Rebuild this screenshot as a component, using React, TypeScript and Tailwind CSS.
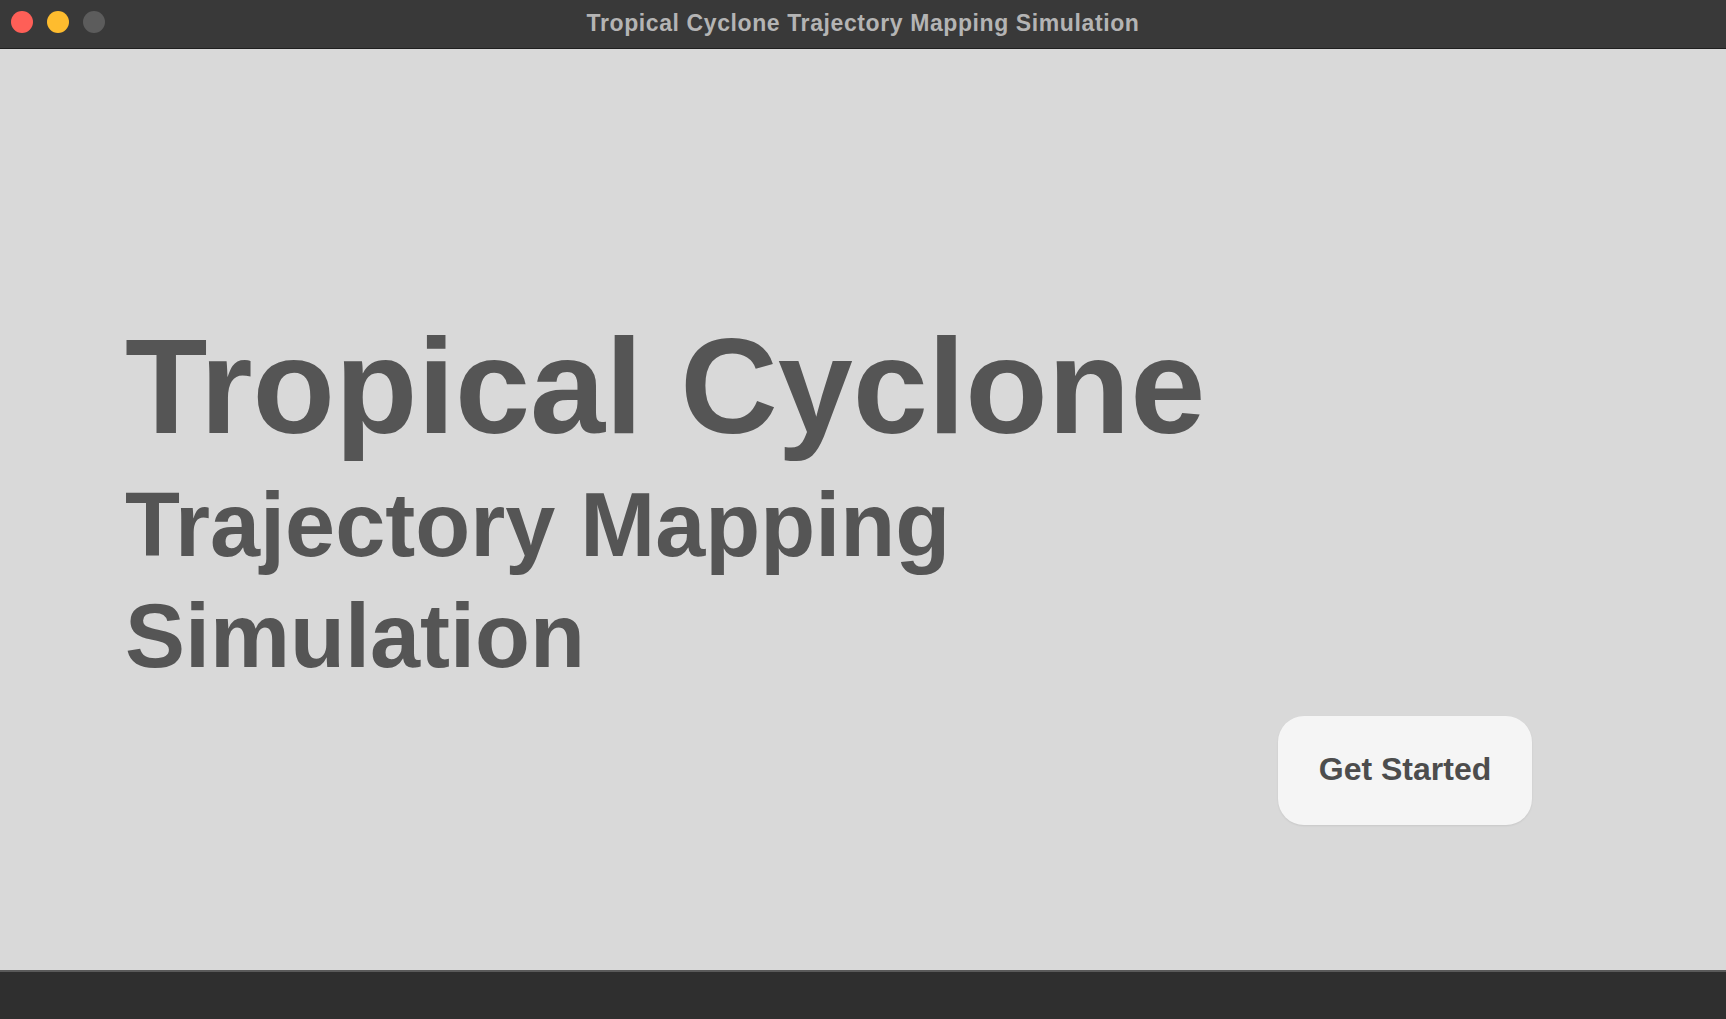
export default function App() {
  return (
    <div className="flex h-[1019px] w-[1726px] flex-col overflow-hidden bg-[#d9d9d9] font-['Liberation_Sans',Arial,sans-serif]">

      {/* Window title bar */}

      <div className="relative flex h-[49px] shrink-0 items-center justify-center border-b border-[#1f1f1f] bg-[#393939]">
        <div className="absolute left-[11px] top-[11px] flex gap-[14px]">
          <span className="h-[22px] w-[22px] rounded-full bg-[#fe5f57]" />
          <span className="h-[22px] w-[22px] rounded-full bg-[#febc2e]" />
          <span className="h-[22px] w-[22px] rounded-full bg-[#5c5c5c]" />
        </div>
        <span className="pb-[2px] text-[23px] font-bold tracking-[0.6px] text-[#b4b4b4]">
          Tropical Cyclone Trajectory Mapping Simulation
        </span>
      </div>

      {/* Main */}

      <main className="flex flex-1 flex-col pt-[270px]">

        <div className="pl-[125px] text-[#555555]">
          <h1 className="text-[135px] font-bold leading-none">
            Tropical Cyclone
          </h1>
          <h2 className="mt-[16px] text-[90px] font-bold leading-[111px]">
            Trajectory Mapping
            <br />
            Simulation
          </h2>
        </div>

        <div className="mt-[24px] flex justify-end pr-[194px]">
          <button className="flex h-[109px] w-[254px] items-center justify-center rounded-[26px] bg-[#f5f5f5] pb-[4px] text-[32px] font-bold text-[#4d4d4d] shadow-[0_1px_2px_rgba(0,0,0,0.08)]">
            Get Started
          </button>
        </div>

      </main>

      {/* Bottom bar */}

      <div className="h-[49px] shrink-0 border-t-2 border-[#5a5a5a] bg-[#2f2f2f]" />
    </div>
  );
}
